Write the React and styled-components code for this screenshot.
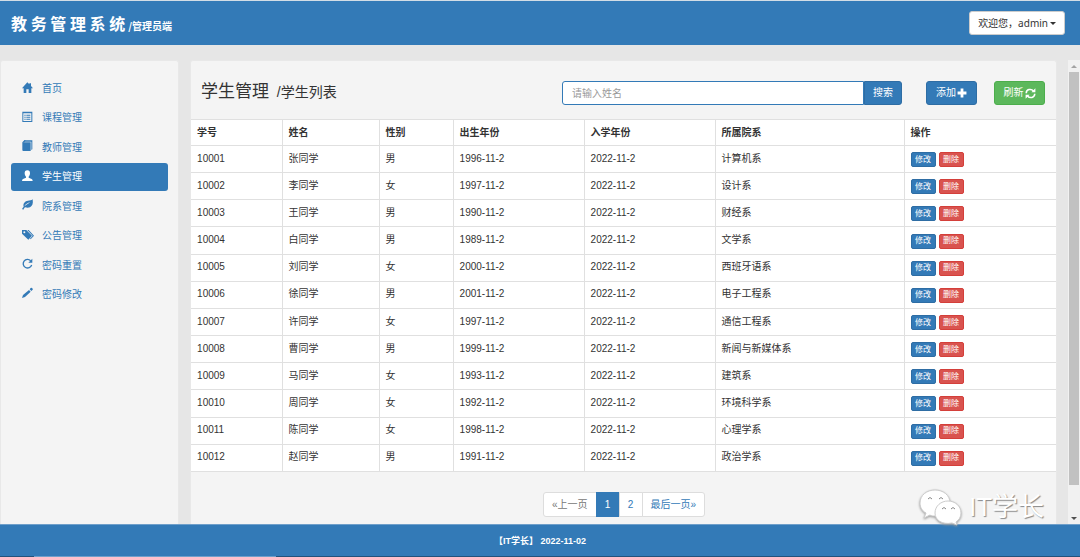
// App.jsx
import { useState } from "react";
import styled, { createGlobalStyle } from "styled-components";

const GlobalStyle = createGlobalStyle`
  * {
    box-sizing: border-box;
  }

  body {
    margin: 0;
    background: #e6e6e6;
    color: #333;
    font-family: "Liberation Sans", "Noto Sans CJK SC", sans-serif;
    font-size: 10px;
    line-height: 14px;
  }

  button,
  input {
    font: inherit;
  }
`;

const Page = styled.div`
  display: flex;
  flex-direction: column;
  height: 100vh;
`;

const Header = styled.header`
  display: flex;
  align-items: center;
  justify-content: space-between;
  height: 45px;
  padding: 0 15px 0 11px;
  background: #337ab7;
  border-top: 1px solid #d3dde6;
  color: white;
`;

const Brand = styled.h1`
  margin: 0;
  padding-top: 2px;
  font-family: "Noto Sans CJK SC", sans-serif;
  font-size: 16px;
  line-height: 24px;
  font-weight: bold;

  small {
    margin-left: 3px;
    font-size: 10px;
  }
`;

const UserButton = styled.button`
  display: flex;
  align-items: center;
  gap: 2px;
  height: 24px;
  padding: 0 8px;
  background: white;
  border: 1px solid #ccc;
  border-radius: 3px;
  color: #333;
  font-family: "Noto Sans", "Noto Sans CJK SC", sans-serif;
  cursor: pointer;
`;

const Caret = styled.span`
  border: 3px solid transparent;
  border-top-color: #333;
  border-bottom: 0;
`;

const Body = styled.div`
  display: flex;
  flex: 1;
  min-height: 0;
  padding-top: 15px;
`;

const Sidebar = styled.nav`
  width: 180px;
  padding: 14px 10px 0;
  background: #f4f4f4;
  border: 1px solid #e8e8e8;
  border-bottom: 0;
  border-radius: 3px 3px 0 0;
`;

const MenuList = styled.ul`
  display: flex;
  flex-direction: column;
  justify-content: space-between;
  height: 234px;
  margin: 0;
  padding: 0;
  list-style: none;
`;

const MenuLink = styled.a`
  display: flex;
  align-items: center;
  gap: 8px;
  height: 28px;
  padding: 0 11px;
  border-radius: 3px;
  background: ${({ $active }) => ($active ? "#337ab7" : "transparent")};
  color: ${({ $active }) => ($active ? "white" : "#337ab7")};
  text-decoration: none;

  svg {
    margin-bottom: 3px;
  }
`;

const Panel = styled.main`
  position: relative;
  flex: 1;
  margin: 0 11px;
  background: #f4f4f4;
  border: 1px solid #e8e8e8;
  border-bottom: 0;
  border-radius: 3px 3px 0 0;
`;

const Toolbar = styled.div`
  display: flex;
  align-items: center;
  height: 58px;
  padding: 6px 11px 0 10px;
`;

const Title = styled.h2`
  flex: 1;
  margin: 0;
  padding-bottom: 3px;
  font-size: 17px;
  line-height: 24px;
  font-weight: normal;

  small {
    margin-left: 3px;
    font-size: 14px;
  }
`;

const SearchForm = styled.form`
  display: flex;
  width: 340px;
`;

const SearchInput = styled.input`
  flex: 1;
  min-width: 0;
  height: 24px;
  padding: 0 9px;
  background: white;
  border: 1px solid #337ab7;
  border-radius: 3px 0 0 3px;
  outline: none;

  &::placeholder {
    color: #999;
  }
`;

const Button = styled.button`
  display: flex;
  align-items: center;
  justify-content: center;
  gap: 1px;
  min-width: 38px;
  height: 24px;
  padding: 0 8px;
  background: ${({ $color }) => $color || "#337ab7"};
  border: 1px solid ${({ $border }) => $border || "#2e6da4"};
  border-radius: 3px;
  color: white;
  cursor: pointer;
`;

const SearchButton = styled(Button)`
  border-radius: 0 3px 3px 0;
`;

const Actions = styled.div`
  display: flex;
  gap: 17px;
  margin-left: 24px;

  button {
    width: 51px;
  }
`;

const Table = styled.table`
  width: 100%;
  height: 353px;
  table-layout: fixed;
  border-collapse: collapse;
  background: white;
  border-top: 1px solid #e0e0e0;
  border-bottom: 1px solid #e0e0e0;
`;

const Col = styled.col`
  width: ${({ $width }) => $width}px;
`;

const Th = styled.th`
  height: 26px;
  padding: 0 6px;
  border-right: 1px solid #e0e0e0;
  text-align: left;

  &:last-child {
    border-right: 0;
  }
`;

const Td = styled.td`
  padding: 0 6px 1px;
  border-top: 1px solid #e0e0e0;
  border-right: 1px solid #e0e0e0;

  &:last-child {
    padding: 1px 6px 0;
    border-right: 0;
  }
`;

const RowActions = styled.div`
  display: flex;
  gap: 3px;
`;

const SmallButton = styled.button`
  width: 25px;
  height: 15px;
  padding: 0;
  background: ${({ $danger }) => ($danger ? "#d9534f" : "#337ab7")};
  border: 1px solid ${({ $danger }) => ($danger ? "#d43f3a" : "#2e6da4")};
  border-radius: 2px;
  color: white;
  font-size: 8px;
  line-height: 12px;
  cursor: pointer;
`;

const Pagination = styled.ul`
  display: flex;
  justify-content: center;
  margin: 20px 0 0;
  padding: 0 0 0 2px;
  list-style: none;
`;

const PageLink = styled.a`
  display: block;
  min-width: 24px;
  height: 25px;
  margin-left: -1px;
  padding: 0 8px;
  background: ${({ $active }) => ($active ? "#337ab7" : "white")};
  border: 1px solid ${({ $active }) => ($active ? "#337ab7" : "#ddd")};
  border-radius: ${({ $edge }) =>
    $edge === "left" ? "3px 0 0 3px" : $edge === "right" ? "0 3px 3px 0" : "0"};
  color: ${({ $active, $muted }) =>
    $active ? "white" : $muted ? "#777" : "#337ab7"};
  line-height: 23px;
  text-align: center;
  text-decoration: none;
`;

const Watermark = styled.div`
  position: absolute;
  right: 12px;
  bottom: -2px;
  display: flex;
  align-items: center;
  gap: 6px;
  color: white;
  font-size: 26px;
  line-height: 36px;
  text-shadow: 1px 1px 1px #888;

  svg {
    filter: drop-shadow(0 1px 1px #999);
  }
`;

const ScrollTrack = styled.div`
  display: flex;
  flex-direction: column;
  align-items: center;
  gap: 4px;
  width: 12px;
  padding: 5px 0 4px;
  background: #f1f1f1;
`;

const ScrollArrow = styled.span`
  border: 3px solid transparent;
  ${({ $down }) =>
    $down
      ? "border-top-color: #505050; border-bottom: 0;"
      : "border-bottom-color: #a3a3a3; border-top: 0;"}
`;

const ScrollThumb = styled.div`
  flex: 1;
  width: 10px;
  margin-bottom: 28px;
  background: #c1c1c1;
`;

const Footer = styled.footer`
  display: flex;
  flex-direction: column;
  height: 33px;
  background: #337ab7;
  border-top: 1px solid #6f9fca;
  color: white;
  font-size: 9px;
  font-weight: bold;
  text-align: center;
`;

const FooterText = styled.p`
  flex: 1;
  margin: 0;
  padding-top: 2px;
  line-height: 29px;
`;

const FooterEdge = styled.div`
  height: 1px;
  padding-left: 34px;
  background: #23527c;

  &::before {
    content: "";
    display: block;
    width: 242px;
    height: 1px;
    background: #6f9fca;
  }
`;

const Svg = ({ children, size = 12 }) => (
  <svg width={size} height={size} viewBox="0 0 36 36" fill="currentColor" aria-hidden="true">
    {children}
  </svg>
);

const HomeIcon = () => (
  <Svg>
    <path d="M16 1 0 19h5v14h8V22h7v11h8V19h5l-6-7V4h-5v3z" />
  </Svg>
);

const ListIcon = () => (
  <Svg>
    <path
      fillRule="evenodd"
      d="M1 2h30v31H1zM4 7v23h24V7zM7 11h4v3H7zM13 11h12v3H13zM7 17h4v3H7zM13 17h12v3H13zM7 23h4v3H7zM13 23h12v3H13z"
    />
  </Svg>
);

const BookIcon = () => (
  <Svg>
    <path d="M7 1h24v27l-3 2V5H5zM1 7h25v26H4q-3 0-3-3z" />
    <path d="M1 7l6-6h4L6 8z" />
  </Svg>
);

const UserIcon = () => (
  <Svg>
    <path d="M16 1c6 0 8 4 8 9 0 4-2 8-4 10v3l9 4q3 1 3 6H0q0-5 3-6l9-4v-3C10 18 8 14 8 10c0-5 2-9 8-9z" />
  </Svg>
);

const LeafIcon = () => (
  <Svg>
    <path
      fillRule="evenodd"
      d="M32 1c2 13-1 20-8 24-5 2-10 2-14 0-3 1-4 4-6 7l-4-2c2-3 3-5 5-7C2 13 9 6 18 5c5 0 10-1 14-4zM25 10C16 12 11 15 7 22c6-5 11-7 18-12z"
    />
  </Svg>
);

const TagsIcon = () => (
  <Svg>
    <path
      fillRule="evenodd"
      d="M0 3h13l17 17-11 12L0 14zM7 7a3 3 0 1 0 0 6 3 3 0 0 0 0-6z"
    />
    <path d="M16 3h4l16 17-10 11-2-2 8-9z" />
  </Svg>
);

const RepeatIcon = () => (
  <Svg>
    <path d="M26 8a13 13 0 1 0 3 13" fill="none" stroke="currentColor" strokeWidth="4" />
    <path d="M31 2v12H19z" />
  </Svg>
);

const PencilIcon = () => (
  <Svg>
    <path d="M26 3q2-2 4 0l2 2q1 2 0 3l-4 4-5-5zM21 9l5 5L9 30l-9 3 3-9z" />
  </Svg>
);

const PlusIcon = () => (
  <Svg size={10}>
    <path d="M13 2h10v11h11v10H23v11H13V23H2V13h11z" />
  </Svg>
);

const RefreshIcon = () => (
  <Svg size={11}>
    <path
      d="M4 17C4 4 20 1 28 10M32 19c0 13-16 16-24 7"
      fill="none"
      stroke="currentColor"
      strokeWidth="5"
    />
    <path d="M34 1v13H21zM2 35V22h13z" />
  </Svg>
);

const WechatIcon = () => (
  <svg width="44" height="38" viewBox="0 0 44 38" aria-hidden="true">
    <g fill="white" stroke="#ccc" strokeWidth="1">
      <path d="M16 2c8 0 15 5 15 13s-7 13-15 13c-2 0-4 0-5-1l-6 3 2-5c-4-2-6-6-6-10C1 7 8 2 16 2z" />
      <path d="M29 13c7 0 13 5 13 12 0 4-2 7-5 9l1 3-5-2c-10 2-17-3-17-10s6-12 13-12z" />
    </g>
    <path
      d="M9 11q2-3 4 0M20 11q2-3 4 0M23 21q2-3 4 0M32 21q2-3 4 0"
      fill="none"
      stroke="#888"
      strokeWidth="1"
    />
  </svg>
);

const menu = [
  { label: "首页", icon: HomeIcon },
  { label: "课程管理", icon: ListIcon },
  { label: "教师管理", icon: BookIcon },
  { label: "学生管理", icon: UserIcon },
  { label: "院系管理", icon: LeafIcon },
  { label: "公告管理", icon: TagsIcon },
  { label: "密码重置", icon: RepeatIcon },
  { label: "密码修改", icon: PencilIcon },
];

const columns = [
  { label: "学号", width: 91 },
  { label: "姓名", width: 97 },
  { label: "性别", width: 74 },
  { label: "出生年份", width: 131 },
  { label: "入学年份", width: 131 },
  { label: "所属院系", width: 189 },
  { label: "操作", width: 152 },
];

const students = [
  ["10001", "张同学", "男", "1996-11-2", "2022-11-2", "计算机系"],
  ["10002", "李同学", "女", "1997-11-2", "2022-11-2", "设计系"],
  ["10003", "王同学", "男", "1990-11-2", "2022-11-2", "财经系"],
  ["10004", "白同学", "男", "1989-11-2", "2022-11-2", "文学系"],
  ["10005", "刘同学", "女", "2000-11-2", "2022-11-2", "西班牙语系"],
  ["10006", "徐同学", "男", "2001-11-2", "2022-11-2", "电子工程系"],
  ["10007", "许同学", "女", "1997-11-2", "2022-11-2", "通信工程系"],
  ["10008", "曹同学", "男", "1999-11-2", "2022-11-2", "新闻与新媒体系"],
  ["10009", "马同学", "女", "1993-11-2", "2022-11-2", "建筑系"],
  ["10010", "周同学", "女", "1992-11-2", "2022-11-2", "环境科学系"],
  ["10011", "陈同学", "女", "1998-11-2", "2022-11-2", "心理学系"],
  ["10012", "赵同学", "男", "1991-11-2", "2022-11-2", "政治学系"],
];

const App = () => {
  const [active, setActive] = useState("学生管理");
  const [keyword, setKeyword] = useState("");

  return (
    <>
      <GlobalStyle />
      <Page>
        <Header>
          <Brand>
            教 务 管 理 系 统<small>/管理员端</small>
          </Brand>
          <UserButton type="button">
            欢迎您，admin
            <Caret />
          </UserButton>
        </Header>

        <Body>
          <Sidebar>
            <MenuList>
              {menu.map(({ label, icon: Icon }) => (
                <li key={label}>
                  <MenuLink href="#" $active={active === label} onClick={() => setActive(label)}>
                    <Icon />
                    {label}
                  </MenuLink>
                </li>
              ))}
            </MenuList>
          </Sidebar>

          <Panel>
            <Toolbar>
              <Title>
                学生管理 <small>/学生列表</small>
              </Title>
              <SearchForm onSubmit={(e) => e.preventDefault()}>
                <SearchInput
                  type="text"
                  aria-label="姓名"
                  placeholder="请输入姓名"
                  value={keyword}
                  onChange={(e) => setKeyword(e.target.value)}
                />
                <SearchButton type="submit">搜索</SearchButton>
              </SearchForm>
              <Actions>
                <Button type="button">
                  添加
                  <PlusIcon />
                </Button>
                <Button type="button" $color="#5cb85c" $border="#4cae4c">
                  刷新
                  <RefreshIcon />
                </Button>
              </Actions>
            </Toolbar>

            <Table>
              <colgroup>
                {columns.map((c) => (
                  <Col key={c.label} $width={c.width} />
                ))}
              </colgroup>
              <thead>
                <tr>
                  {columns.map((c) => (
                    <Th key={c.label} scope="col">
                      {c.label}
                    </Th>
                  ))}
                </tr>
              </thead>
              <tbody>
                {students.map((row) => (
                  <tr key={row[0]}>
                    {row.map((cell, i) => (
                      <Td key={i}>{cell}</Td>
                    ))}
                    <Td>
                      <RowActions>
                        <SmallButton type="button">修改</SmallButton>
                        <SmallButton type="button" $danger>
                          删除
                        </SmallButton>
                      </RowActions>
                    </Td>
                  </tr>
                ))}
              </tbody>
            </Table>

            <Pagination>
              <li>
                <PageLink href="#" $edge="left" $muted>
                  «上一页
                </PageLink>
              </li>
              <li>
                <PageLink href="#" $active>
                  1
                </PageLink>
              </li>
              <li>
                <PageLink href="#">2</PageLink>
              </li>
              <li>
                <PageLink href="#" $edge="right">
                  最后一页»
                </PageLink>
              </li>
            </Pagination>

            <Watermark>
              <WechatIcon />
              IT学长
            </Watermark>
          </Panel>

          <ScrollTrack>
            <ScrollArrow />
            <ScrollThumb />
            <ScrollArrow $down />
          </ScrollTrack>
        </Body>

        <Footer>
          <FooterText>【IT学长】 2022-11-02</FooterText>
          <FooterEdge />
        </Footer>
      </Page>
    </>
  );
};

export default App;
